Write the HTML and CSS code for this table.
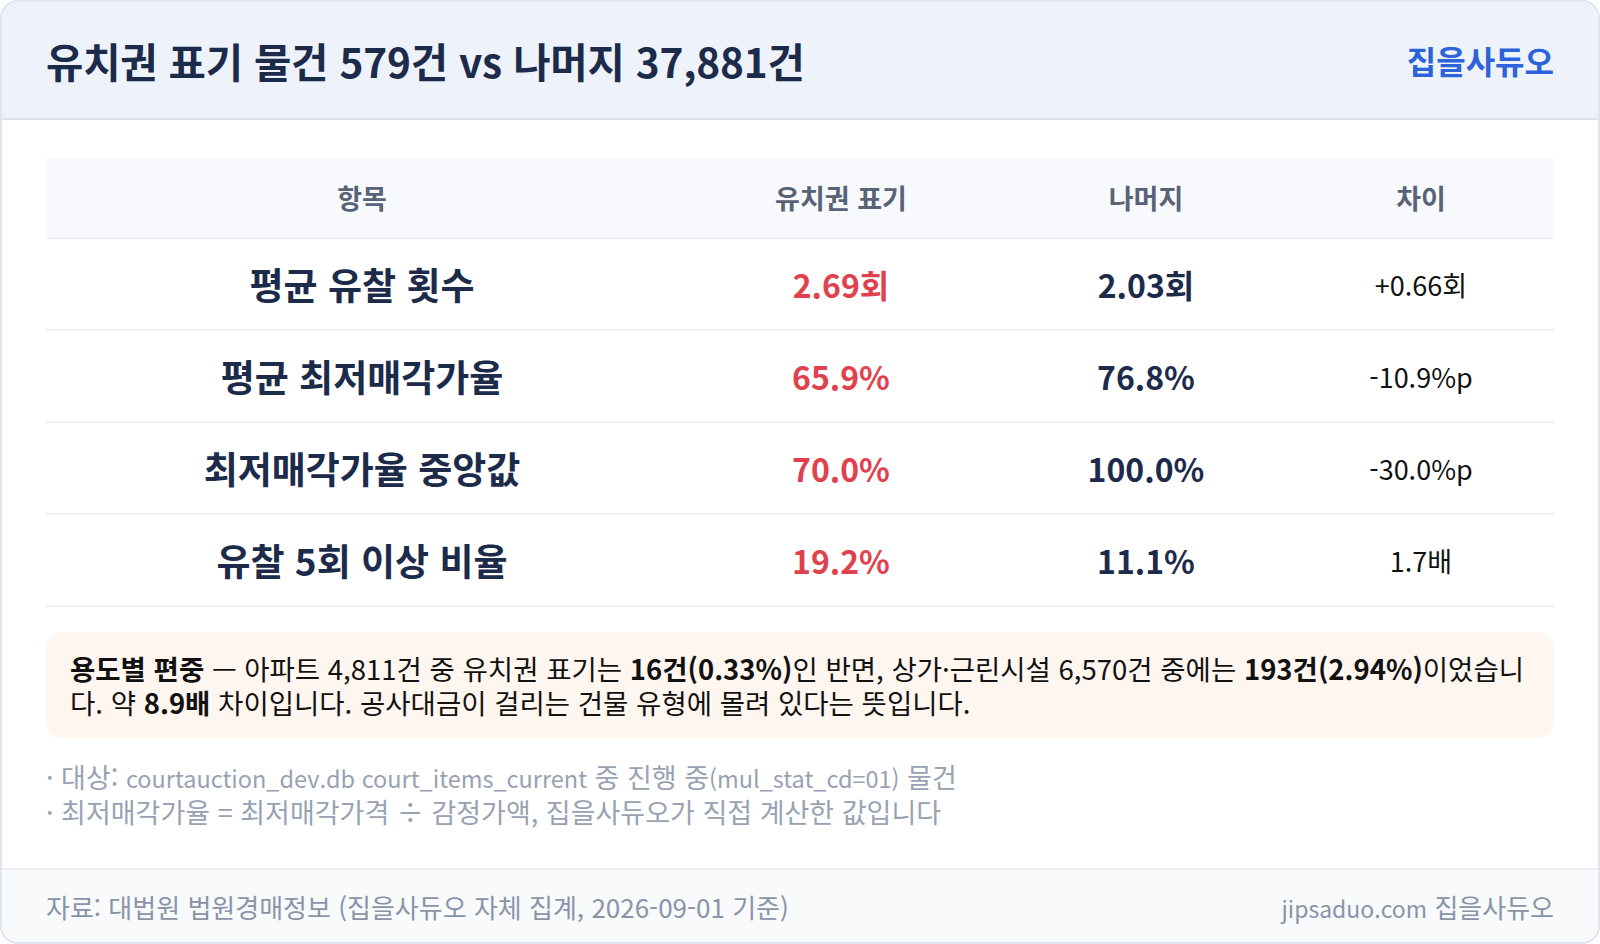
FILE: index.html
```html
<!DOCTYPE html>
<html lang="ko">
<head>
<meta charset="utf-8">
<link rel="stylesheet" href="styles.css">
</head>
<body>
<div class="card">
  <header class="card-head">
    <h1 class="title">유치권 표기 물건 579건 vs 나머지 37,881건</h1>
    <div class="brand">집을사듀오</div>
  </header>
  <main class="card-body">
    <table class="cmp">
      <colgroup>
        <col class="c1"><col class="c2"><col class="c3"><col class="c4">
      </colgroup>
      <thead>
        <tr><th>항목</th><th>유치권 표기</th><th>나머지</th><th>차이</th></tr>
      </thead>
      <tbody>
        <tr><td class="label">평균 유찰 횟수</td><td class="val red">2.69회</td><td class="val">2.03회</td><td class="diff">+0.66회</td></tr>
        <tr><td class="label">평균 최저매각가율</td><td class="val red">65.9%</td><td class="val">76.8%</td><td class="diff">-10.9%p</td></tr>
        <tr><td class="label">최저매각가율 중앙값</td><td class="val red">70.0%</td><td class="val">100.0%</td><td class="diff">-30.0%p</td></tr>
        <tr><td class="label">유찰 5회 이상 비율</td><td class="val red">19.2%</td><td class="val">11.1%</td><td class="diff">1.7배</td></tr>
      </tbody>
    </table>
    <div class="note"><b>용도별 편중</b> — 아파트 4,811건 중 유치권 표기는 <b>16건(0.33%)</b>인 반면, 상가·근린시설 6,570건 중에는 <b>193건(2.94%)</b>이었습니다. 약 <b>8.9배</b> 차이입니다. 공사대금이 걸리는 건물 유형에 몰려 있다는 뜻입니다.</div>
    <ul class="foot-notes">
      <li>· 대상: <span class="en">courtauction_dev.db court_items_current</span> 중 진행 중<span class="en">(mul_stat_cd=01)</span> 물건</li>
      <li>· 최저매각가율 = 최저매각가격 ÷ 감정가액, 집을사듀오가 직접 계산한 값입니다</li>
    </ul>
  </main>
  <footer class="card-foot">
    <span>자료: 대법원 법원경매정보 (집을사듀오 자체 집계, 2026-09-01 기준)</span>
    <span><span class="en-foot">jipsaduo.com</span> 집을사듀오</span>
  </footer>
</div>
</body>
</html>
```

FILE: styles.css
```css
* { box-sizing: border-box; }
html, body { margin: 0; padding: 0; background: #ffffff; }
body {
  font-family: "Noto Sans CJK KR", "Noto Sans", sans-serif;
  width: 1600px;
  height: 944px;
}
.card {
  width: 1600px;
  height: 944px;
  border: 2px solid #dfe5ef;
  border-radius: 18px;
  overflow: hidden;
  display: flex;
  flex-direction: column;
  background: #fff;
}
.card-head {
  height: 118px;
  background: #eef3fb;
  border-bottom: 2px solid #dce4f2;
  display: flex;
  align-items: center;
  justify-content: space-between;
  padding: 0 44px 0 44px;
}
.title {
  margin: 0;
  font-size: 40.6px;
  font-weight: 700;
  color: #1d2b4a;
  letter-spacing: -0.2px;
}
.brand {
  font-size: 32px;
  font-weight: 700;
  color: #2d63d8;
}
.card-body {
  flex: 1;
  padding: 38px 44px 0 44px;
}
.cmp {
  width: 100%;
  border-collapse: collapse;
  table-layout: fixed;
}
.c1 { width: 632px; }
.c2 { width: 326px; }
.c3 { width: 284px; }
.c4 { width: 266px; }
.cmp th {
  background: #f7f9fc;
  height: 80px;
  border-bottom: 2px solid #edf0f5;
  font-size: 27px;
  font-weight: 700;
  color: #596377;
  text-align: center;
  padding: 0;
}
.cmp td {
  height: 92px;
  border-bottom: 2px solid #edf0f5;
  text-align: center;
  padding: 0;
}
.label {
  font-size: 37px;
  font-weight: 700;
  color: #1d2b4a;
}
.val {
  font-size: 32px;
  font-weight: 700;
  color: #1d2b4a;
}
.val.red { color: #e0414d; }
.diff {
  font-size: 27px;
  font-weight: 400;
  color: #111111;
}
.note {
  margin-top: 25px;
  background: #fff6f0;
  border-radius: 16px;
  padding: 19px 24px;
  font-size: 27.5px;
  line-height: 34px;
  color: #111111;
}
.note b { font-weight: 700; }
.foot-notes {
  list-style: none;
  margin: 22px 0 0 0;
  padding: 0;
  font-size: 27px;
  line-height: 33px;
  color: #98a2b3;
}
.foot-notes .en { font-size: 23.5px; }
.card-foot {
  height: 74px;
  background: #f8fafc;
  border-top: 2px solid #e8edf5;
  display: flex;
  align-items: center;
  justify-content: space-between;
  padding: 0 44px;
  font-size: 26px;
  color: #8a94a8;
}
.en-foot { font-size: 23px; }
```
